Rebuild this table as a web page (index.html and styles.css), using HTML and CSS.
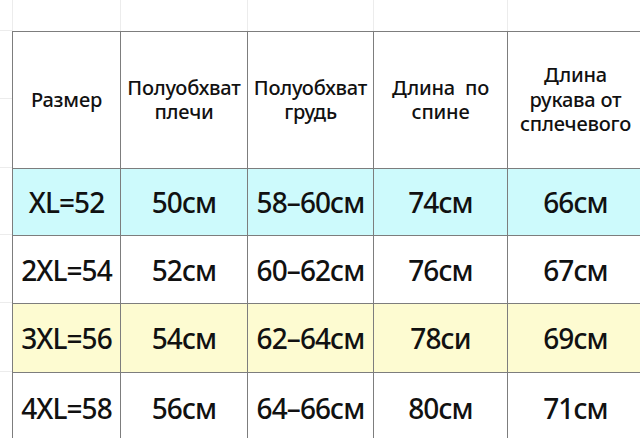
FILE: index.html
```html
<!DOCTYPE html>
<html lang="ru">
<head>
<meta charset="utf-8">
<title>Размеры</title>
<link rel="stylesheet" href="styles.css">
</head>
<body>
<div class="sheet">
  <div class="g g-corner"></div>
  <div class="g g-top"></div>
  <div class="g g-top"></div>
  <div class="g g-top"></div>
  <div class="g g-top"></div>
  <div class="g g-top"></div>

  <div class="g g-left g-left-head"></div>
  <div class="c head">Размер</div>
  <div class="c head">Полуобхват<br>плечи</div>
  <div class="c head">Полуобхват<br>грудь</div>
  <div class="c head">Длина&nbsp; по<br>спине</div>
  <div class="c head">Длина<br>рукава от<br>сплечевого</div>

  <div class="g g-left"></div>
  <div class="c cyan">XL=52</div>
  <div class="c cyan">50см</div>
  <div class="c cyan">58–60см</div>
  <div class="c cyan">74см</div>
  <div class="c cyan">66см</div>

  <div class="g g-left"></div>
  <div class="c">2XL=54</div>
  <div class="c">52см</div>
  <div class="c">60–62см</div>
  <div class="c">76см</div>
  <div class="c">67см</div>

  <div class="g g-left"></div>
  <div class="c yellow">3XL=56</div>
  <div class="c yellow">54см</div>
  <div class="c yellow">62–64см</div>
  <div class="c yellow">78си</div>
  <div class="c yellow">69см</div>

  <div class="g g-left"></div>
  <div class="c">4XL=58</div>
  <div class="c">56см</div>
  <div class="c">64–66см</div>
  <div class="c">80см</div>
  <div class="c">71см</div>
</div>
</body>
</html>
```
FILE: styles.css
```css
html, body {
  margin: 0;
  padding: 0;
  background: #ffffff;
}

body {
  width: 640px;
  height: 438px;
  overflow: hidden;
  font-family: "Noto Sans", "Open Sans", sans-serif;
  color: #111111;
}

.sheet {
  display: grid;
  grid-template-columns: 12px 108px 127px 126px 134px 136px;
  grid-template-rows: 31px 137px 67px 68px 69px 70px;
}

.g {
  box-sizing: border-box;
}

.g-top {
  border-left: 1px solid #ececec;
}

.g-corner {
  border-bottom: 1px solid #ececec;
}

.g-left {
  border-bottom: 1px solid #ececec;
}

.g-left-head {
  position: relative;
}

.g-left-head::after {
  content: "";
  position: absolute;
  left: 0;
  right: 0;
  top: 67px;
  border-top: 1px solid #ececec;
}

.c {
  box-sizing: border-box;
  border-left: 1px solid #7d7d7d;
  border-top: 1px solid #7d7d7d;
  display: flex;
  align-items: center;
  justify-content: center;
  text-align: center;
  font-size: 28px;
  font-weight: 500;
  letter-spacing: -0.9px;
  white-space: nowrap;
}

.head {
  font-size: 20px;
  font-weight: 500;
  line-height: 24.5px;
  letter-spacing: -0.2px;
}

.cyan {
  background: #cdfafc;
}

.yellow {
  background: #fdfbd1;
}
```
